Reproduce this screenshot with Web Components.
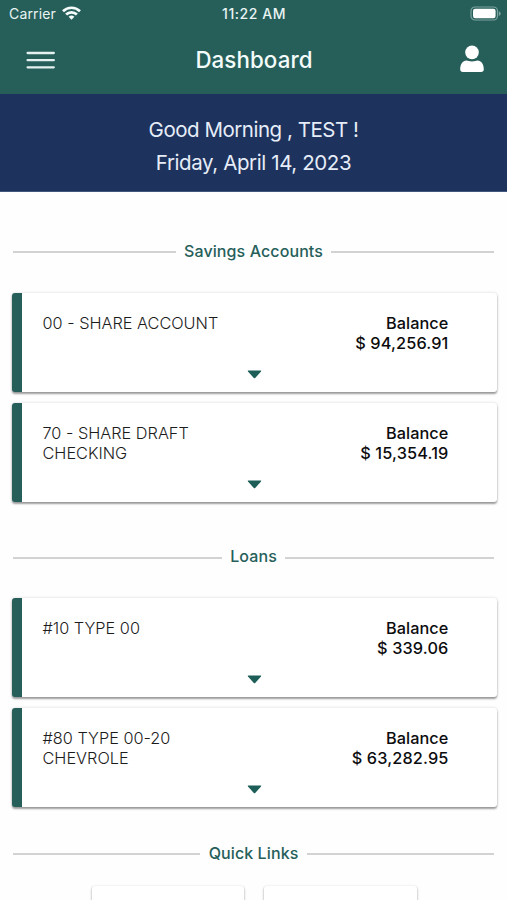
<!DOCTYPE html>
<html lang="en">
<head>
<meta charset="utf-8">
<title>Dashboard</title>
<style>
html, body { margin: 0; height: 900px; overflow: hidden; background: #fefefe; }
body { font-family: Inter, "Liberation Sans", sans-serif; --green: #265f5a; --navy: #1d325c; }
</style>
</head>
<body>
<bank-app></bank-app>
<script>
const define = (name, html) => customElements.define(name, class extends HTMLElement {
  constructor() {
    super();
    const t = document.createElement('template');
    t.innerHTML = html;
    this.attachShadow({ mode: 'open' }).append(t.content.cloneNode(true));
  }
});

define('status-bar', `
<style>
:host { display: grid; grid-template-columns: 1fr auto 1fr; align-items: center; height: 27px; padding: 0 6px 0 9px; color: #e9f4f3; box-sizing: border-box; }
.left { display: flex; align-items: center; gap: 6px; font-size: 14px; letter-spacing: .15px; }
.time { font-size: 14px; font-weight: 500; letter-spacing: .55px; margin-right: 2px; }
.battery { justify-self: end; }
svg { display: block; }
.left svg { margin-top: -2px; }
.battery { margin-top: -1px; }
</style>
<div class="left"><span>Carrier</span>
<svg width="19" height="14" viewBox="0 0 19 14" fill="none" stroke="#f4fbfa" stroke-width="2.7"><path d="M1 5.2a12.2 12.2 0 0 1 17 0M4.1 8.5a7.7 7.7 0 0 1 10.8 0"/><path d="M9.5 13.7 6.6 10.8a4.2 4.2 0 0 1 5.8 0z" fill="#f4fbfa" stroke="none"/></svg></div>
<span class="time">11:22 AM</span>
<svg class="battery" width="31" height="15" viewBox="0 0 31 15"><rect x="1" y="1" width="26.5" height="13" rx="4" fill="none" stroke="#7ea39f" stroke-width="1.2"/><rect x="3" y="2.8" width="22.6" height="9.4" rx="2.2" fill="#fff"/><path d="M28.8 5.2q1.9.8 1.9 2.4t-1.9 2.4z" fill="#7ea39f"/></svg>
`);

define('app-bar', `
<style>
:host { display: grid; grid-template-columns: 1fr auto 1fr; align-items: center; height: 66.5px; padding: 0 22px 0 26px; box-sizing: border-box; color: #f4fcfb; }
.title { font-size: 22.3px; font-weight: 500; letter-spacing: .1px; line-height: 28px; margin: -1px 3px 0 0; }
svg { display: block; }
.user { justify-self: end; margin-top: -2px; }
.menu { margin-top: -1.5px; }
</style>
<svg class="menu" width="30" height="20" viewBox="0 0 30 20" stroke="#e3f1f0" stroke-width="2.3" stroke-linecap="round"><path d="M1.6 3H27.8M1.6 10.2H27.8M1.6 17.3H27.8"/></svg>
<span class="title"><slot></slot></span>
<svg class="user" width="26" height="28" viewBox="0 0 26 28" fill="#fff"><circle cx="13" cy="7.4" r="6.8"/><path d="M1.2 24.3c0-5 2.6-8.7 6.2-8.7 1.6 0 2.8 1 5.6 1s4-1 5.6-1c3.6 0 6.2 3.7 6.2 8.7 0 1.9-1 2.7-2.7 2.7H3.9c-1.7 0-2.7-.8-2.7-2.7z"/></svg>
`);

define('greeting-banner', `
<style>
:host { display: flex; flex-direction: column; align-items: center; height: 98px; padding-top: 19.5px; box-sizing: border-box; background: var(--navy); color: #e6edf8; border-bottom: 1px solid #40567a; font-size: 20.5px; line-height: 33px; letter-spacing: -.48px; }
.date { letter-spacing: -.4px; }
</style>
<div><slot></slot></div><div class="date"><slot name="date"></slot></div>
`);

define('section-title', `
<style>
:host { display: flex; align-items: center; gap: 8.5px; height: 24px; margin: 0 13px; color: var(--green); font-size: 16px; font-weight: 500; line-height: 24px; letter-spacing: .1px; }
i { flex: 1; height: 2px; background: #d2d2d2; margin-top: 3px; }
</style>
<i></i><span><slot></slot></span><i></i>
`);

define('account-card', `
<style>
:host { display: grid; grid-template-columns: 180px 1fr; box-sizing: border-box; height: 99.3px; margin: 0 10px 0 11.5px; padding: 21.2px 48.5px 0 21px; border-left: 10px solid var(--green); border-radius: 3px; background: #fff; box-shadow: 0 2px 2px rgba(0,0,0,.36), 0 0 3px rgba(0,0,0,.16); font-size: 16.3px; line-height: 19.6px; color: #1c1c1c; position: relative; }
.name { font-weight: 300; }
.bal { text-align: right; font-weight: 500; letter-spacing: .08px; color: #0c0c0e; }
.amount { letter-spacing: .14px; }
svg { position: absolute; left: 225.5px; top: 76.8px; }
</style>
<div class="name"><slot></slot></div>
<div class="bal">Balance<br><span class="amount"><slot name="amount"></slot></span></div>
<svg width="15" height="9" viewBox="0 0 15 9"><path d="M1.3 .4H13.7q1 0 .3 1L8.2 8q-.7.7-1.4 0L1 1.4Q.3.4 1.3.4z" fill="#1d5f58"/></svg>
`);

define('card-stack', `<style>:host { display: flex; flex-direction: column; gap: 10.3px; }</style><slot></slot>`);

define('quick-links', `
<style>
:host { display: flex; justify-content: center; gap: 20px; padding-left: 1px; }
div { width: 152.5px; height: 60px; border-radius: 3px; background: #fff; box-shadow: 0 1px 2.5px rgba(0,0,0,.42); }
</style>
<div></div><div></div>
`);

define('bank-app', `
<style>
:host { display: block; width: 507px; height: 900px; overflow: hidden; }
header { background: var(--green); }
</style>
<header><status-bar></status-bar><app-bar>Dashboard</app-bar></header>
<greeting-banner>Good Morning , TEST !<span slot="date">Friday, April 14, 2023</span></greeting-banner>
<section-title style="margin-top:47.3px">Savings Accounts</section-title>
<card-stack style="margin-top:30.4px">
<account-card>00 - SHARE ACCOUNT<span slot="amount">$ 94,256.91</span></account-card>
<account-card>70 - SHARE DRAFT CHECKING<span slot="amount">$ 15,354.19</span></account-card>
</card-stack>
<section-title style="margin-top:42.4px">Loans</section-title>
<card-stack style="margin-top:29.7px">
<account-card>#10 TYPE 00<span slot="amount">$ 339.06</span></account-card>
<account-card>#80 TYPE 00-20 CHEVROLE<span slot="amount">$ 63,282.95</span></account-card>
</card-stack>
<section-title style="margin-top:33.7px">Quick Links</section-title>
<quick-links style="margin-top:21.3px"></quick-links>
`);
</script>
</body>
</html>
